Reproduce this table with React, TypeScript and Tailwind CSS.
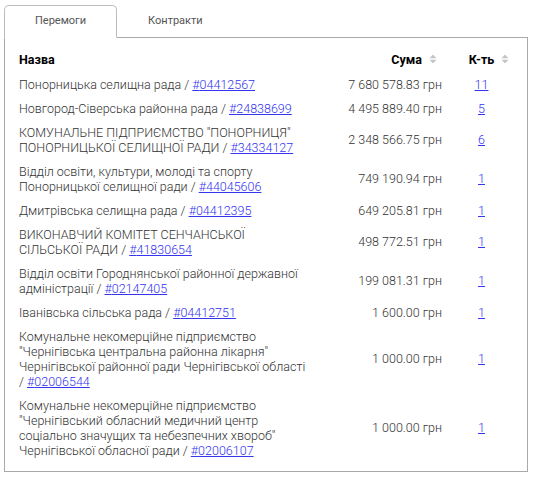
import React from "react";

interface Row {
  name: string;
  code: string;
  sum: string;
  count: number;
}

const ROWS: Row[] = [
  { name: "Понорницька селищна рада", code: "04412567", sum: "7 680 578.83 грн", count: 11 },
  { name: "Новгород-Сіверська районна рада", code: "24838699", sum: "4 495 889.40 грн", count: 5 },
  { name: "КОМУНАЛЬНЕ ПІДПРИЄМСТВО \"ПОНОРНИЦЯ\" ПОНОРНИЦЬКОЇ СЕЛИЩНОЇ РАДИ", code: "34334127", sum: "2 348 566.75 грн", count: 6 },
  { name: "Відділ освіти, культури, молоді та спорту Понорницької селищної ради", code: "44045606", sum: "749 190.94 грн", count: 1 },
  { name: "Дмитрівська селищна рада", code: "04412395", sum: "649 205.81 грн", count: 1 },
  { name: "ВИКОНАВЧИЙ КОМІТЕТ СЕНЧАНСЬКОЇ СІЛЬСЬКОЇ РАДИ", code: "41830654", sum: "498 772.51 грн", count: 1 },
  { name: "Відділ освіти Городнянської районної державної адміністрації", code: "02147405", sum: "199 081.31 грн", count: 1 },
  { name: "Іванівська сільська рада", code: "04412751", sum: "1 600.00 грн", count: 1 },
  { name: "Комунальне некомерційне підприємство \"Чернігівська центральна районна лікарня\" Чернігівської районної ради Чернігівської області", code: "02006544", sum: "1 000.00 грн", count: 1 },
  { name: "Комунальне некомерційне підприємство \"Чернігівський обласний медичний центр соціально значущих та небезпечних хвороб\" Чернігівської обласної ради", code: "02006107", sum: "1 000.00 грн", count: 1 },
];

function SortIcon() {
  return (
    <svg width="8" height="10" viewBox="0 0 8 10" className="block">
      <path d="M4 0.5 L7.5 4.2 H0.5 Z" fill="#c4c4c4" />
      <path d="M4 9.5 L7.5 5.8 H0.5 Z" fill="#c4c4c4" />
    </svg>
  );
}

export default function App() {
  return (
    <div className="w-[537px] h-[483px] bg-white pl-[4px] pt-[5px] font-['Roboto',sans-serif] text-[#333]">
      {/* tabs */}
      <div className="flex h-[33px] relative z-10 -mb-px">
        <div className="h-[33px] px-[30px] flex items-center border border-[#bdbdbd] border-b-white rounded-t-[5px] bg-white text-[11px] text-[#555]">
          Перемоги
        </div>
        <div className="h-[33px] px-[31px] flex items-center text-[11px] text-[#555]">Контракти</div>
      </div>

      <div className="w-[524px] border border-[#aaa] px-[14px] pt-[10px] pb-[9px]">
        <div className="grid grid-cols-[296px_137px_61px] text-[12.5px] leading-[15px] font-light">
          {/* header */}
          <div className="pt-[3.5px] pb-[5.5px] font-bold text-[12.5px] text-black">Назва</div>
          <div className="relative pt-[3.5px] pb-[5.5px] pr-[30px] text-right font-bold text-[12.5px] text-black">
            Сума
            <span className="absolute right-[15px] top-[6px]">
              <SortIcon />
            </span>
          </div>
          <div className="relative pt-[3.5px] pb-[5.5px] pr-[2px] text-center font-bold text-[12.5px] text-black">
            К-ть
            <span className="absolute right-[4px] top-[6px]">
              <SortIcon />
            </span>
          </div>

          {ROWS.map((r) => (
            <React.Fragment key={r.code}>
              <div className="py-[4.5px] pr-[5px]">
                {r.name} /{" "}
                <a href="#" className="text-[#3535f0] underline">
                  #{r.code}
                </a>
              </div>
              <div className="py-[4.5px] pr-[10px] flex items-center justify-end whitespace-nowrap">{r.sum}</div>
              <div className="py-[4.5px] pr-[2px] flex items-center justify-center">
                <a href="#" className="text-[#3535f0] underline">
                  {r.count}
                </a>
              </div>
            </React.Fragment>
          ))}
        </div>
      </div>
    </div>
  );
}
